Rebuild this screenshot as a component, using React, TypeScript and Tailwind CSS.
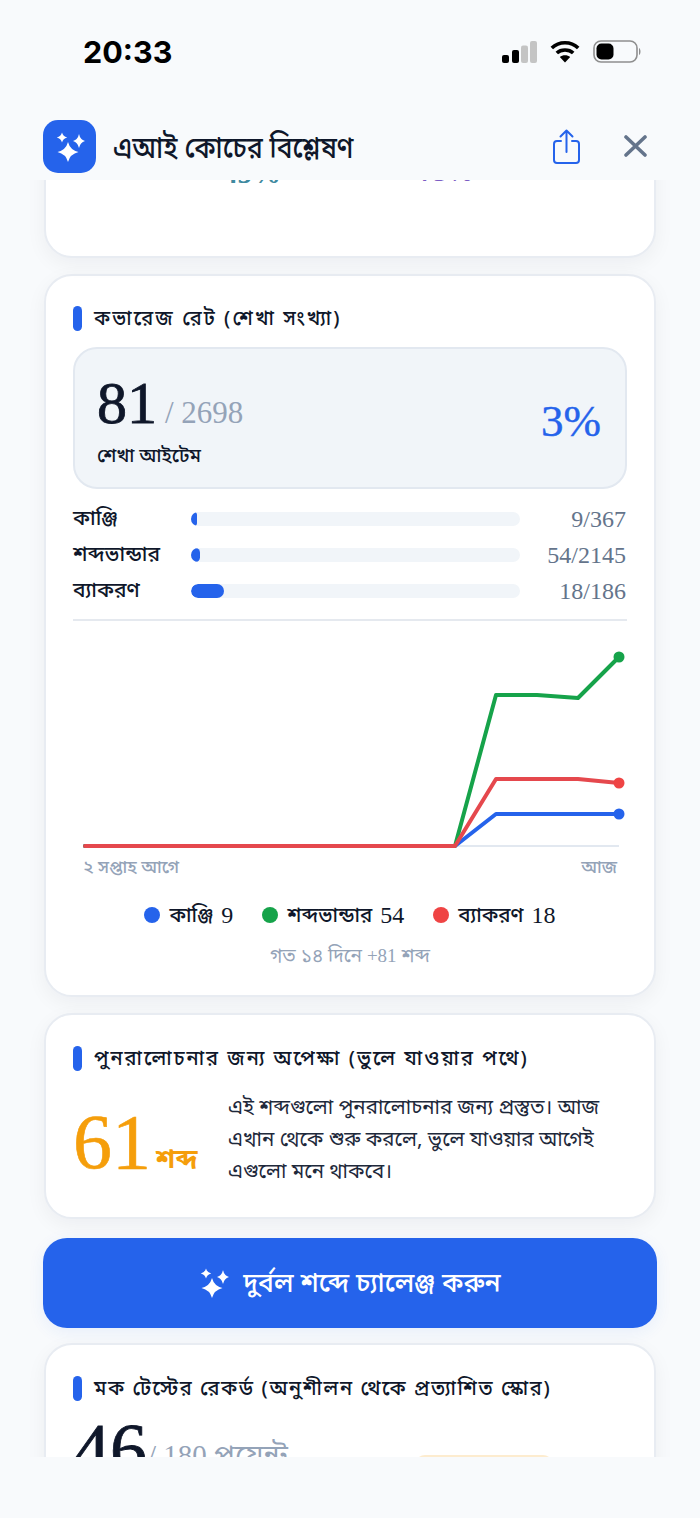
const bn = "font-['Noto_Sans','Noto_Sans_Bengali','Lohit_Bengali','FreeSans',sans-serif]";
const num = "font-['Liberation_Serif','Noto_Sans_Bengali',serif]";
const heavy = "[-webkit-text-stroke-width:0.8px]";
const card = "mx-[44px] rounded-[28px] bg-white border-2 border-[#e8ecf2] shadow-[0_6px_20px_rgba(15,23,42,0.05)]";

function star(cx: number, cy: number, w: number, h: number) {
  const a = 0.2;
  const cw = w * a;
  const ch = h * a;
  return `M${cx} ${cy - h} Q${cx + cw} ${cy - ch} ${cx + w} ${cy} Q${cx + cw} ${cy + ch} ${cx} ${cy + h} Q${cx - cw} ${cy + ch} ${cx - w} ${cy} Q${cx - cw} ${cy - ch} ${cx} ${cy - h}Z`;
}

function Sparkles({ className }: { className: string }) {
  return (
    <svg viewBox="0 0 30 30" className={className} fill="currentColor">
      <path d={star(13, 20, 10.5, 10)} />
      <path d={star(7, 5.5, 5.2, 5)} />
      <path d={star(24, 9, 6, 7)} />
    </svg>
  );
}

function Heading({ children, tracking }: { children: React.ReactNode; tracking: string }) {
  return (
    <div className="flex items-center gap-[12px] h-[26px]">
      <span className="w-[9px] h-[25px] rounded-full bg-[#2563eb] shrink-0" />
      <span className={`text-[20px] font-medium text-[#0f172a] whitespace-nowrap ${tracking}`}>{children}</span>
    </div>
  );
}

function Row({ label, w, value }: { label: string; w: number; value: string }) {
  return (
    <div className="flex items-center h-[36px]">
      <span className="w-[118px] text-[21px] font-medium text-[#0f172a] whitespace-nowrap -mt-[2px]">{label}</span>
      <div className="w-[329px] h-[14px] rounded-full bg-[#f1f5f9] overflow-hidden">
        <div className="h-full rounded-full bg-[#2563eb]" style={{ width: w }} />
      </div>
      <span className={`flex-1 text-right pr-[1px] text-[24px] text-[#64748b] ${num}`}>{value}</span>
    </div>
  );
}

function Legend({ color, label, value }: { color: string; label: string; value: string }) {
  return (
    <div className="flex items-center">
      <span className={`w-[16px] h-[16px] rounded-full mr-[9px] ${color}`} />
      <span className="text-[20.5px] font-medium text-[#0f172a] whitespace-nowrap -mt-[2px]">{label}</span>
      <span className={`ml-[8px] text-[24px] text-[#0f172a] ${num}`}>{value}</span>
    </div>
  );
}

function Chart() {
  const base = 216;
  const pts = (a: number, b: number, c: number, d: number) =>
    `12,${base} 382,${base} 423,${a} 464,${b} 505,${c} 546,${d}`;
  return (
    <svg width="554" height="224" viewBox="0 0 554 224" className="block mt-[9px]">
      <line x1="382" y1={base} x2="546" y2={base} stroke="#e2e8f0" strokeWidth="2" />
      <polyline points={pts(184, 184, 184, 184)} fill="none" stroke="#2563eb" strokeWidth="4" strokeLinejoin="round" strokeLinecap="round" />
      <polyline points={pts(65, 65, 68, 27)} fill="none" stroke="#16a34a" strokeWidth="4" strokeLinejoin="round" strokeLinecap="round" />
      <polyline points={pts(149, 149, 149, 153)} fill="none" stroke="#e5484d" strokeWidth="4" strokeLinejoin="round" strokeLinecap="round" />
      <circle cx="546" cy="184" r="5.5" fill="#2563eb" />
      <circle cx="546" cy="27" r="5.5" fill="#16a34a" />
      <circle cx="546" cy="153" r="5.5" fill="#ef4444" />
    </svg>
  );
}

export default function App() {
  return (
    <div className={`w-[700px] h-[1518px] bg-[#f8fafc] overflow-hidden flex flex-col ${bn}`}>
      <div className="h-[104px] shrink-0 flex items-start justify-between pl-[83px] pr-[58px] pt-[34px]">
        <span className="font-['Inter',sans-serif] font-bold text-[30.5px] leading-[36px] text-black">20:33</span>
        <div className="flex items-center gap-[13px] mt-[6px]">
          <svg width="35" height="22" viewBox="0 0 35 22">
            <rect x="0" y="14" width="7" height="8" rx="2" fill="#000" />
            <rect x="10" y="9" width="7" height="13" rx="2" fill="#000" />
            <rect x="19" y="4.5" width="7" height="17.5" rx="2" fill="#c4c4c4" />
            <rect x="28" y="0" width="7" height="22" rx="2" fill="#c4c4c4" />
          </svg>
          <svg width="30" height="23" viewBox="0 0 30 23" fill="none" stroke="#000" strokeWidth="3.6">
            <path d="M1.8 8 C9 1 21 1 28.2 8" />
            <path d="M6.8 13 C11 9 19 9 23.2 13" />
            <path d="M15 22.5 L9.8 17 C12.5 14.6 17.5 14.6 20.2 17 Z" fill="#000" stroke="none" />
          </svg>
          <svg width="49" height="23" viewBox="0 0 49 23">
            <rect x="1" y="1" width="43" height="21" rx="7" fill="none" stroke="#8e8e8e" strokeWidth="1.6" />
            <rect x="3.5" y="3.5" width="17" height="16" rx="5" fill="#000" />
            <path d="M46 8 C48 9 48 14 46 15 Z" fill="#8e8e8e" />
          </svg>
        </div>
      </div>

      <div className="h-[76px] shrink-0 flex items-start pl-[43px] pt-[16px] relative">
        <div className="w-[53px] h-[53px] rounded-[15px] bg-[#2563eb] flex items-center justify-center text-white">
          <Sparkles className="w-[30px] h-[30px]" />
        </div>
        <span className="ml-[17px] text-[30px] font-medium leading-[53px] text-[#0f172a] whitespace-nowrap origin-left scale-x-[0.88]">এআই কোচের বিশ্লেষণ</span>
        <div className="absolute left-[553px] top-[25px]">
          <svg width="27" height="35" viewBox="0 0 27 35" fill="none" stroke="#2563eb" strokeWidth="2" strokeLinecap="round" strokeLinejoin="round">
            <path d="M8 12 H4 A3 3 0 0 0 1 15 V31 A3 3 0 0 0 4 34 H23 A3 3 0 0 0 26 31 V15 A3 3 0 0 0 23 12 H19" />
            <path d="M13.5 23 V1.5 M7.5 7.5 L13.5 1.5 L19.5 7.5" />
          </svg>
        </div>
        <div className="absolute left-[624px] top-[31px]">
          <svg width="23" height="22" viewBox="0 0 23 22" fill="none" stroke="#64748b" strokeWidth="3.6" strokeLinecap="round">
            <path d="M2 2 L21 20 M21 2 L2 20" />
          </svg>
        </div>
      </div>

      <div className="h-[1277px] shrink-0 overflow-hidden">
        <div className={`${card} h-[120px] -mt-[42px] relative`}>
          <span className={`absolute left-[177px] top-[12px] text-[29px] font-bold text-[#3f8aa0] ${num}`}>45%</span>
          <span className={`absolute left-[374px] top-[12px] text-[27px] font-bold text-[#7c5cc4] ${num}`}>75%</span>
        </div>

        <div className={`${card} mt-[16px] h-[723px] px-[27px] pt-[29px]`}>
          <Heading tracking="tracking-[2.1px]">কভারেজ রেট (শেখা সংখ্যা)</Heading>
          <div className="mt-[16px] h-[142px] rounded-[24px] bg-[#f1f5f9] border-2 border-[#e2e8f0] pl-[22px] pr-[24px] flex items-center justify-between">
            <div>
              <div className="flex items-baseline h-[66px] mt-[3px]">
                <span className={`text-[60px] leading-[66px] text-[#0f172a] ${heavy} ${num}`}>81</span>
                <span className={`ml-[8px] text-[31px] text-[#94a3b8] ${num}`}>/ 2698</span>
              </div>
              <div className="text-[19px] font-medium text-[#0f172a] mt-[5px] leading-[28px]">শেখা আইটেম</div>
            </div>
            <span className={`text-[45px] text-[#2563eb] [-webkit-text-stroke-width:0.4px] ${num} mt-[7px]`}>3%</span>
          </div>
          <div className="mt-[12px]">
            <Row label="কাঞ্জি" w={6} value="9/367" />
            <Row label="শব্দভান্ডার" w={9} value="54/2145" />
            <Row label="ব্যাকরণ" w={33} value="18/186" />
          </div>
          <div className="mt-[10px] h-[2px] bg-[#e5e9ef]" />
          <Chart />
          <div className="flex justify-between px-[10px] text-[17.5px] font-medium text-[#94a3b8] leading-[24px]">
            <span>২ সপ্তাহ আগে</span>
            <span>আজ</span>
          </div>
          <div className="flex justify-center gap-[29px] mt-[22px] h-[30px] items-center">
            <Legend color="bg-[#2563eb]" label="কাঞ্জি" value="9" />
            <Legend color="bg-[#16a34a]" label="শব্দভান্ডার" value="54" />
            <Legend color="bg-[#ef4444]" label="ব্যাকরণ" value="18" />
          </div>
          <div className="mt-[12px] text-center text-[19px] text-[#94a3b8] leading-[26px]">গত ১৪ দিনে <span className={num}>+81</span> শব্দ</div>
        </div>

        <div className={`${card} mt-[16px] h-[206px] px-[27px] pt-[30px]`}>
          <Heading tracking="tracking-[2px]">পুনরালোচনার জন্য অপেক্ষা (ভুলে যাওয়ার পথে)</Heading>
          <div className="flex mt-[19px]">
            <div className="w-[155px] flex items-baseline mt-[12px] h-[80px]">
              <span className={`text-[78px] leading-[80px] text-[#f59e0b] [-webkit-text-stroke-width:0.6px] ${num}`}>61</span>
              <span className="ml-[5px] text-[27px] font-bold text-[#f59e0b]">শব্দ</span>
            </div>
            <p className="w-[388px] text-[20.5px] leading-[32px] text-[#1e293b]">
              এই শব্দগুলো পুনরালোচনার জন্য প্রস্তুত। আজ এখান থেকে শুরু করলে, ভুলে যাওয়ার আগেই এগুলো মনে থাকবে।
            </p>
          </div>
        </div>

        <button className="mx-[43px] mt-[19px] w-[614px] h-[90px] rounded-[24px] bg-[#2563eb] text-white flex items-center justify-center gap-[14px] shadow-[0_4px_16px_rgba(37,99,235,0.08)]">
          <Sparkles className="w-[30px] h-[30px]" />
          <span className="text-[26.5px] font-medium whitespace-nowrap">দুর্বল শব্দে চ্যালেঞ্জ করুন</span>
        </button>

        <div className={`${card} mt-[15px] h-[200px] px-[27px] pt-[30px] relative`}>
          <Heading tracking="tracking-[1.6px]">মক টেস্টের রেকর্ড (অনুশীলন থেকে প্রত্যাশিত স্কোর)</Heading>
          <div className="flex items-start mt-[11px]">
            <span className={`text-[74px] leading-[76px] text-[#0f172a] ${heavy} ${num}`}>46</span>
            <span className="ml-[1px] mt-[22px] text-[29px] leading-[40px] text-[#94a3b8]"><span className={num}>/ 180</span> পয়েন্ট</span>
          </div>
          <div className="absolute left-[369px] top-[110px] w-[138px] h-[40px] rounded-[10px] bg-[#fdeccf]" />
        </div>
      </div>
      <div className="flex-1" />
    </div>
  );
}
